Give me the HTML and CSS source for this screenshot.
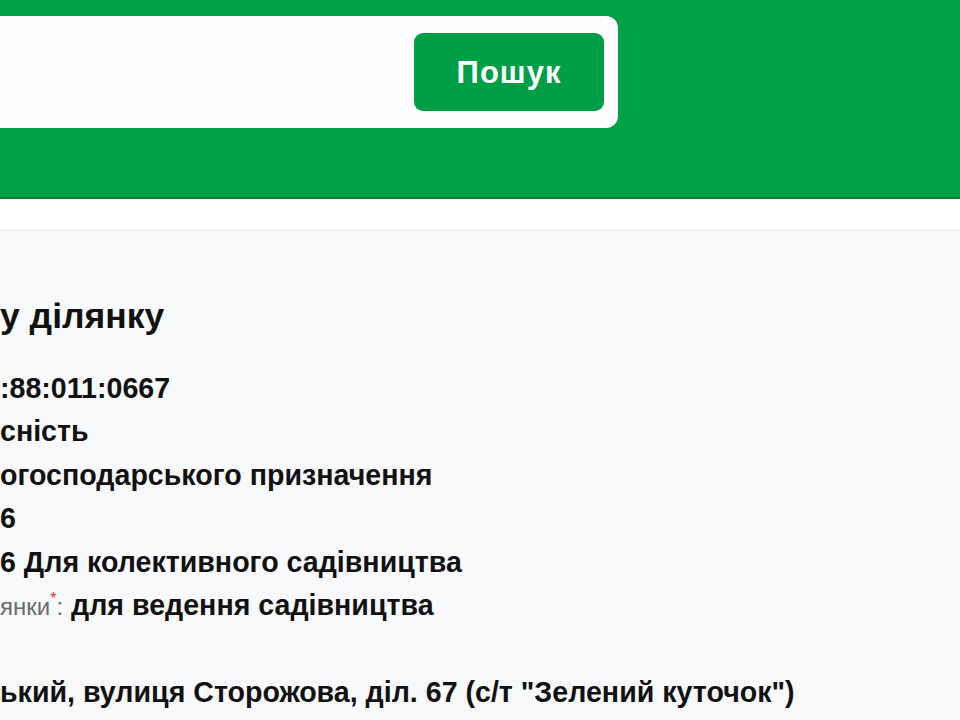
FILE: index.html
```html
<!DOCTYPE html>
<html lang="uk">
<head>
  <meta charset="UTF-8">
  <title>Пошук ділянки</title>
  <link rel="stylesheet" href="styles.css">
</head>

<body>
  <header class="top">
    <form class="search">
      <input class="search-input" type="text" aria-label="Кадастровий номер">
      <button class="search-btn" type="submit">Пошук</button>
    </form>
  </header>

  <div class="subbar"></div>

  <main class="info">
    <h1 class="info-title">у ділянку</h1>
    <ul class="info-list">
      <li>:88:011:0667</li>
      <li>сність</li>
      <li>огосподарського призначення</li>
      <li>6</li>
      <li>6 Для колективного садівництва</li>
      <li><span class="label">янки<sup class="req">*</sup>:</span> для ведення садівництва</li>
      <li class="empty"></li>
      <li>ький, вулиця Сторожова, діл. 67 (с/т "Зелений куточок")</li>
    </ul>
  </main>
</body>
</html>
```

FILE: styles.css
```css
html, body {
  margin: 0;
  padding: 0;
}
body {
  background: #f8f9fb;
  font-family: "Liberation Sans", Arial, sans-serif;
  color: #111;
  overflow: hidden;
}

/* верхня зелена смуга з пошуком */
.top {
  background: #00a045;
  height: 199px;
  border-bottom: 2px solid #00803a;
  padding-top: 16px;
  box-sizing: border-box;
}
.search {
  display: flex;
  align-items: center;
  width: 638px;
  height: 112px;
  margin-left: -20px;
  padding: 0 14px 0 20px;
  box-sizing: border-box;
  background: #fdfdfd;
  border-radius: 12px;
}
.search-input {
  flex: 1;
  border: none;
  background: transparent;
  height: 60px;
  outline: none;
}
.search-btn {
  width: 190px;
  height: 78px;
  border: none;
  border-radius: 9px;
  background: #009e47;
  color: #fff;
  font-family: "Liberation Sans", Arial, sans-serif;
  font-size: 31px;
  letter-spacing: 1px;
  font-weight: bold;
  padding-top: 2px;
}

.subbar {
  height: 30px;
  background: #fff;
  border-bottom: 2px solid #eef0f3;
}

/* блок з інформацією про ділянку */
.info {
  padding-top: 65px;
}
.info-title {
  margin: 0 0 31px;
  font-size: 35.5px;
  line-height: 40px;
  font-weight: bold;
}
.info-list {
  list-style: none;
  margin: 0;
  padding: 0;
}
.info-list li {
  font-size: 28.6px;
  line-height: 43.4px;
  height: 43.4px;
  font-weight: bold;
  white-space: nowrap;
}
.label {
  font-weight: normal;
  color: #6b6b6b;
  font-size: 24px;
  line-height: 0;
}
.req {
  color: #e33;
  font-size: 16px;
  line-height: 0;
  vertical-align: 0.7em;
}
```
